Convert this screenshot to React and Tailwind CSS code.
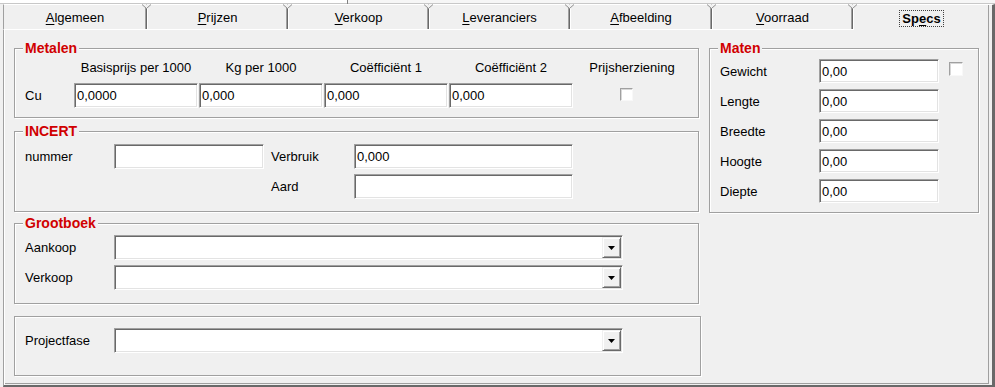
import React from "react";

const sunken =
  "bg-white border border-t-[#a0a0a0] border-l-[#a0a0a0] border-r-white border-b-white shadow-[inset_1px_1px_0_#696969,inset_-1px_-1px_0_#e3e3e3]";

function Field({ value = "", className = "" }) {
  return (
    <div className={`${sunken} flex items-center pl-[2px] leading-none ${className}`}>
      {value}
    </div>
  );
}

function Combo() {
  return (
    <div className={`${sunken} w-[509px] h-[25px] flex justify-end p-[1px]`}>
      <div className="w-[19px] h-full bg-[#f0f0f0] border border-t-[#f0f0f0] border-l-[#f0f0f0] border-r-[#696969] border-b-[#696969] shadow-[inset_1px_1px_0_#fff,inset_-1px_-1px_0_#a0a0a0] flex items-center justify-center">
        <svg width="7" height="4" viewBox="0 0 7 4">
          <path d="M0 0h7L3.5 4z" fill="#000" />
        </svg>
      </div>
    </div>
  );
}

function Check({ className = "" }) {
  return (
    <div className={`bg-white border border-t-[#a0a0a0] border-l-[#a0a0a0] border-r-[#f8f8f8] border-b-[#f8f8f8] shadow-[inset_1px_1px_0_#d8d8d8] ${className}`} />
  );
}

function Group({ title, className = "", children }) {
  return (
    <fieldset className={`border border-[#a0a0a0] shadow-[inset_1px_1px_0_#fff,1px_1px_0_#fff] px-[8px] ${className}`}>
      <legend className="px-[2px] bg-[#f0f0f0] text-[#d00000] font-bold text-[14px] leading-[14px]">
        {title}
      </legend>
      {children}
    </fieldset>
  );
}

const tabs = [
  { a: "", k: "A", b: "lgemeen", w: "w-[144px]" },
  { a: "", k: "P", b: "rijzen", w: "w-[141px]" },
  { a: "", k: "V", b: "erkoop", w: "w-[141px]" },
  { a: "", k: "L", b: "everanciers", w: "w-[141px]" },
  { a: "", k: "A", b: "fbeelding", w: "w-[142px]" },
  { a: "", k: "V", b: "oorraad", w: "w-[141px]" },
];

function Tab({ tab, first }) {
  return (
    <div
      className={`relative ${tab.w} h-full bg-[#f0f0f0] border-t border-t-white border-l ${
        first ? "border-l-[#a0a0a0]" : "border-l-white"
      } border-r border-r-[#696969] shadow-[inset_-1px_0_0_#a0a0a0] flex items-center justify-center leading-none`}
    >
      <span>
        {tab.a}
        <span className="underline underline-offset-2">{tab.k}</span>
        {tab.b}
      </span>
      <svg className="absolute -right-[5px] -top-[1px] z-10" width="9" height="5" viewBox="0 0 9 5">
        <path d="M0 0.5L4.5 4.5L9 0.5" fill="#f0f0f0" stroke="#909090" />
      </svg>
    </div>
  );
}

function Label({ children, className = "" }) {
  return <div className={`pl-[2px] leading-none ${className}`}>{children}</div>;
}

export default function App() {
  return (
    <div className="w-[995px] h-[387px] bg-[#f0f0f0] overflow-hidden font-['Liberation_Sans',Arial,sans-serif] text-[13px] text-black flex flex-col">
      {/* strip of the controls above */}
      <div className="h-[4px] flex shrink-0">
        <div className="w-[347px] bg-white border-b border-[#c8c8c8]" />
        <div className="w-[1px] bg-[#808080]" />
        <div className="flex-1 bg-[#f6f6f6] border-b border-[#c8c8c8]" />
      </div>

      {/* Tabs */}
      <div className="h-[25px] flex pl-[3px] shrink-0 relative z-10">
        {tabs.map((t, i) => (
          <Tab key={i} tab={t} first={i === 0} />
        ))}
        <div className="flex-1 h-[26px] bg-[#f0f0f0] border-t border-t-white border-l border-l-white border-r-[3px] border-r-[#696969] shadow-[inset_-3px_0_0_#f0f0f0,inset_-4px_0_0_#a0a0a0] flex items-center justify-center pt-[1px] pr-[3px]">
          <span className="border border-dotted border-[#404040] px-[2px] py-[1px] font-bold leading-[13px]">
            Sp<span className="underline underline-offset-2">e</span>cs
          </span>
        </div>
      </div>

      {/* Panel */}
      <div className="ml-[3px] flex-1 flex pl-[10px] border-l border-l-[#a0a0a0] border-t border-t-white border-r-[3px] border-r-[#696969] border-b-2 border-b-[#696969] shadow-[inset_1px_0_0_#fff,inset_-3px_-1px_0_#f0f0f0,inset_-4px_-2px_0_#a0a0a0]">
        {/* Left column */}
        <div className="w-[687px] flex flex-col">
          <Group title="Metalen" className="w-[685px] mt-[11px] pb-[9px]">
            <div className="flex mt-[5px] h-[16px] items-center gap-[1px]">
              <div className="w-[50px]" />
              <div className="w-[124px] text-center">Basisprijs per 1000</div>
              <div className="w-[124px] text-center">Kg per 1000</div>
              <div className="w-[124px] text-center">Coëfficiënt 1</div>
              <div className="w-[124px] text-center">Coëfficiënt 2</div>
              <div className="w-[116px] text-center">Prijsherziening</div>
            </div>
            <div className="flex mt-[7px] h-[25px] items-center gap-[1px]">
              <Label className="w-[50px]">Cu</Label>
              <Field value="0,0000" className="w-[124px] h-[25px]" />
              <Field value="0,000" className="w-[124px] h-[25px]" />
              <Field value="0,000" className="w-[124px] h-[25px]" />
              <Field value="0,000" className="w-[124px] h-[25px]" />
              <Check className="w-[13px] h-[13px] ml-[46px] mt-[-2px]" />
            </div>
          </Group>

          <Group title="INCERT" className="w-[685px] mt-[6px] pb-[12px]">
            <div className="flex mt-[6px] h-[25px] items-center">
              <Label className="w-[91px]">nummer</Label>
              <Field className="w-[150px] h-[25px]" />
              <Label className="w-[85px] ml-[5px]">Verbruik</Label>
              <Field value="0,000" className="w-[219px] h-[25px]" />
            </div>
            <div className="flex mt-[5px] h-[25px] items-center">
              <div className="w-[246px]" />
              <Label className="w-[85px]">Aard</Label>
              <Field className="w-[219px] h-[25px]" />
            </div>
          </Group>

          <Group title="Grootboek" className="w-[685px] mt-[4px] pb-[13px]">
            <div className="flex mt-[5px] h-[25px] items-center">
              <Label className="w-[91px]">Aankoop</Label>
              <Combo />
            </div>
            <div className="flex mt-[5px] h-[25px] items-center">
              <Label className="w-[91px]">Verkoop</Label>
              <Combo />
            </div>
          </Group>

          <div className="w-[687px] mt-[12px] pt-[11px] pb-[22px] pl-[8px] border border-[#a0a0a0] shadow-[inset_1px_1px_0_#fff,1px_1px_0_#fff]">
            <div className="flex h-[25px] items-center">
              <Label className="w-[91px]">Projectfase</Label>
              <Combo />
            </div>
          </div>
        </div>

        {/* Right column */}
        <div className="ml-[8px]">
          <Group title="Maten" className="w-[270px] mt-[11px] pb-[9px]">
            <div className="flex flex-col gap-[6px] mt-[4px]">
              {["Gewicht", "Lengte", "Breedte", "Hoogte", "Diepte"].map((l, i) => (
                <div key={l} className="flex h-[24px] items-center">
                  <Label className="w-[101px]">{l}</Label>
                  <Field value="0,00" className="w-[120px] h-[24px]" />
                  {i === 0 && <Check className="w-[14px] h-[14px] ml-[10px] mt-[-4px]" />}
                </div>
              ))}
            </div>
          </Group>
        </div>
      </div>
    </div>
  );
}
